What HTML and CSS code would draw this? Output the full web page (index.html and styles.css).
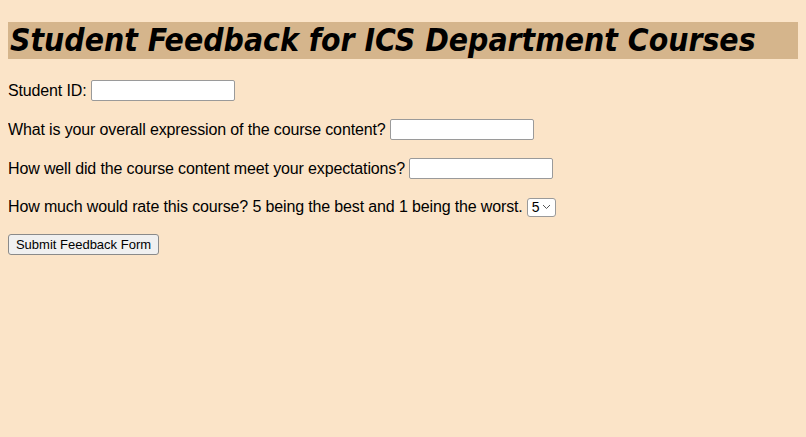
FILE: index.html
```html
<!DOCTYPE html>
<html>
<head>
<meta charset="utf-8">
<title>Student Feedback</title>
<link rel="stylesheet" href="styles.css">
</head>
<body>
<h1 class="title">Student Feedback for ICS Department Courses</h1>
<form class="form">
<p class="row"><label>Student ID:</label> <input class="field" type="text"></p>
<p class="row"><label>What is your overall expression of the course content?</label> <input class="field" type="text"></p>
<p class="row"><label>How well did the course content meet your expectations?</label> <input class="field" type="text"></p>
<p class="row row-select"><label>How much would rate this course? 5 being the best and 1 being the worst.</label> <span class="select"><span class="select-val">5</span><svg class="chev" width="9" height="6" viewBox="0 0 9 6"><path d="M1 1 L4.5 4.5 L8 1" fill="none" stroke="#555" stroke-width="1"/></svg></span></p>
<p class="row row-btn"><button class="btn" type="button">Submit Feedback Form</button></p>
</form>
</body>
</html>
```
FILE: styles.css
```css
html, body {
  background: #fbe4c8;
}
body {
  margin: 0 8px 8px;
  font-family: "Liberation Sans", Arial, sans-serif;
  font-size: 16px;
  color: #000;
}
.title {
  font-family: "DejaVu Sans Condensed", "DejaVu Sans", sans-serif;
  font-stretch: condensed;
  font-style: italic;
  font-weight: bold;
  font-size: 31.6px;
  white-space: nowrap;
  background: #d5b58c;
  margin: 22px 0 20px;
  height: 37px;
  line-height: 37px;
  padding-left: 2px;
  overflow: hidden;
}
.form {
  margin: 0;
}
.row {
  margin: 0 0 16px;
  display: flex;
  align-items: center;
  gap: 4px;
  height: 23px;
  letter-spacing: -0.14px;
}
.row-select {
  height: 22px;
  margin-bottom: 15px;
}
.field {
  box-sizing: border-box;
  width: 144px;
  height: 21px;
  border: 1px solid #9a9a9a;
  border-radius: 2px;
  background: #fff;
  margin: 0;
  padding: 0 2px;
}
.select {
  box-sizing: border-box;
  display: inline-flex;
  align-items: center;
  gap: 3px;
  height: 19px;
  width: 29px;
  border: 1px solid #9a9a9a;
  border-radius: 3px;
  background: #fff;
  padding: 0 3px 0 4px;
  font-size: 14px;
  letter-spacing: 0;
}
.chev { display: block; }
.btn {
  box-sizing: border-box;
  height: 21px;
  width: 151px;
  border: 1px solid #8a8a8a;
  border-radius: 3px;
  background: #f0f0f0;
  font-family: "Liberation Sans", Arial, sans-serif;
  font-size: 13px;
  padding: 0 6px;
  color: #000;
  letter-spacing: 0;
}
```
